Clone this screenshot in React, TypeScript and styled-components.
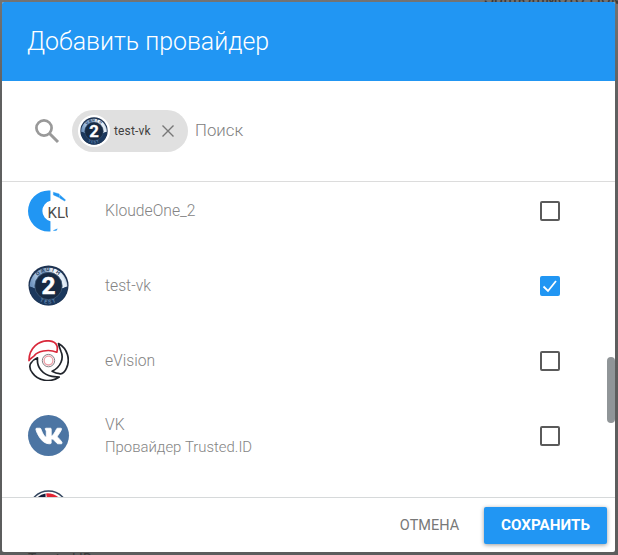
import React from "react";
import styled, { createGlobalStyle } from "styled-components";
import { FaVk } from "react-icons/fa";

const GlobalStyle = createGlobalStyle`
  * { box-sizing: border-box; }
  body { margin: 0; overflow: hidden; font-family: Roboto, "Liberation Sans", sans-serif; }
`;

const Backdrop = styled.div`
  position: relative;
  width: 618px;
  height: 555px;
  padding: 2px 3px 3px 2px;
  overflow: hidden;
  background: linear-gradient(#737373, #5f6060 18%, #5c5d5d);
`;

const PageText = styled.span<{ $x: number; $y: number; $size: number }>`
  position: absolute;
  left: ${(p) => p.$x}px;
  top: ${(p) => p.$y}px;
  font-size: ${(p) => p.$size}px;
  line-height: 16px;
  white-space: nowrap;
  color: #393939;
`;

const Dialog = styled.section`
  position: relative;
  display: flex;
  flex-direction: column;
  height: 550px;
  background: #fff;
  border-radius: 2px;
  overflow: hidden;
`;

const Header = styled.header`
  flex: none;
  display: flex;
  align-items: center;
  height: 79px;
  padding: 0 25px;
  background: #2196f3;
`;

const Title = styled.h1`
  margin: 0;
  font-size: 24.9px;
  font-weight: 300;
  line-height: 32px;
  color: #fff;
`;

const SearchBar = styled.div`
  flex: none;
  display: flex;
  align-items: center;
  height: 101px;
  padding: 0 32px;
  border-bottom: 1px solid #dcdcdc;
`;

const SearchIcon = styled.svg`
  width: 26px;
  height: 26px;
  margin-right: 12px;
`;

const Chip = styled.div`
  display: flex;
  align-items: center;
  width: 116px;
  height: 42px;
  padding-left: 6px;
  margin-right: 7px;
  border-radius: 21px;
  background: #e0e0e0;
`;

const ChipImage = styled.div`
  display: flex;
  align-items: center;
  justify-content: center;
  width: 32px;
  height: 32px;
  margin-right: 4px;
  border-radius: 50%;
  background: #fff;
`;

const ChipLabel = styled.span`
  width: 48px;
  font-size: 12px;
  letter-spacing: 0.15px;
  color: #404040;
`;

const SearchInput = styled.input`
  flex: 1;
  min-width: 0;
  padding: 0 0 2px;
  border: 0;
  outline: 0;
  background: transparent;
  font: 300 16.8px/24px Roboto, sans-serif;
  color: #555;
  &::placeholder { color: #808080; opacity: 1; }
`;

const List = styled.ul`
  flex: none;
  height: 315px;
  margin: 0;
  padding: 0;
  overflow: hidden;
  list-style: none;
`;

const Row = styled.li`
  display: flex;
  align-items: center;
  height: 75px;
  padding: 0 55px 0 26px;
  &:first-child { margin-top: -9px; }
`;

const Avatar = styled.div`
  flex: none;
  display: flex;
  width: 41px;
  height: 42px;
  margin-right: 36px;
  align-items: center;
`;

const RowText = styled.div`
  flex: 1;
  font-weight: 300;
  line-height: 22px;
  color: #848484;
`;

const Line = styled.div<{ $size?: number }>`
  font-size: ${(p) => p.$size ?? 15.7}px;
`;

const Check = styled.span<{ $on: boolean }>`
  display: flex;
  width: 20px;
  height: 20px;
  border: 2px solid ${(p) => (p.$on ? "#2196f3" : "#5a5a5a")};
  border-radius: 2px;
  background: ${(p) => (p.$on ? "#2196f3" : "#fff")};
`;

const VkCircle = styled.div`
  display: flex;
  align-items: center;
  justify-content: center;
  width: 41px;
  height: 41px;
  border-radius: 50%;
  background: #4c75a3;
  color: #fff;
  svg { stroke: #fff; stroke-width: 18px; }
`;

const ScrollThumb = styled.div`
  position: absolute;
  top: 355px;
  right: 0;
  width: 8px;
  height: 66px;
  border-radius: 4px;
  background: #909598;
`;

const Footer = styled.footer`
  flex: 1;
  display: flex;
  align-items: center;
  justify-content: flex-end;
  padding-right: 8px;
  border-top: 1px solid #d6d9da;
`;

const Button = styled.button<{ $primary?: boolean }>`
  width: ${(p) => (p.$primary ? 123 : 109)}px;
  height: 37px;
  padding: 0;
  border: 0;
  border-radius: 2px;
  font-family: inherit;
  font-size: ${(p) => (p.$primary ? 15.2 : 14.5)}px;
  font-weight: ${(p) => (p.$primary ? 700 : 400)};
  color: ${(p) => (p.$primary ? "#fff" : "#787878")};
  background: ${(p) => (p.$primary ? "#2196f3" : "transparent")};
  box-shadow: ${(p) => (p.$primary ? "0 1px 4px rgba(0,0,0,.4)" : "none")};
`;

function OauthLogo({ size, id }: { size: number; id: string }) {
  return (
    <svg width={size} height={size} viewBox="0 0 42 42">
      <defs>
        <linearGradient id={id} x1="0" y1="0.6" x2="1" y2="0.4">
          <stop offset="0" stopColor="#6f93bd" />
          <stop offset=".2" stopColor="#a3c0df" />
          <stop offset=".45" stopColor="#7696ba" />
          <stop offset=".7" stopColor="#f2f7fc" />
          <stop offset=".88" stopColor="#dfeaf5" />
          <stop offset="1" stopColor="#7590ae" />
        </linearGradient>
        <path id={id + "t"} d="M6.200 21a14.800 14.800 0 0 1 29.600 0" />
        <path id={id + "b"} d="M2.500 21a18.500 18.500 0 0 0 37 0" />
      </defs>
      <circle cx="21" cy="21" r="20.500" fill="#1c3150" />
      <path d="M1.700 22a19.300 19.300 0 0 1 38.600 0L35 24H7z" fill={`url(#${id})`} />
      <path d="M1.700 22a19.300 19.300 0 0 0 38.600 0L35 24H7z" fill="#1b385d" />
      <circle cx="21" cy="21.500" r="14" fill="#172a43" stroke="#3f5b7a" strokeWidth=".8" />
      <g fontFamily="Roboto, sans-serif" fontWeight="700" fontSize="5.500" letterSpacing="1.400" textAnchor="middle">
        <text fill="#2b4261"><textPath href={`#${id}t`} startOffset="50%">OAUTH</textPath></text>
        <text fill="#5d80ab"><textPath href={`#${id}b`} startOffset="50%">TEST</textPath></text>
      </g>
      <text x="21" y="30" textAnchor="middle" fontFamily="Roboto, sans-serif" fontWeight="700" fontSize="25" fill="#fff" stroke="#fff" strokeWidth=".5">2</text>
    </svg>
  );
}

function KloudeLogo() {
  return (
    <svg width="42" height="42" viewBox="0 0 42 42">
      <path d="M23 0H21A21 21 0 0 0 21 42H23V31.500A10.800 10.800 0 0 1 23 10.500Z" fill="#2196f3" />
      <path d="M26 1.800l6 1.700 .5 4-6.500-3zM33 4.800l5.500 5-1 .9-4.800-2.700zM26 41l4-1.700-1 1.700z" fill="#2196f3" stroke="#2196f3" strokeWidth=".4" />
      <svg width="41" height="42" overflow="hidden">
        <text x="20" y="28.500" fontFamily="Roboto, sans-serif" fontSize="15.500" fill="#4d4d4d">KLU</text>
      </svg>
    </svg>
  );
}

function VisionLogo() {
  return (
    <svg width="41" height="41" viewBox="0 0 41 41" fill="none" strokeWidth="1.700" strokeLinejoin="round">
      <path d="M1 20.500C1 8 11 0 21 .9c4 .3 7 2 8 5 .6 2.400.4 4.200-.2 6.300C20 8.500 9 11.500 6.500 15.500 4.500 17.500 2.500 18.600 1 20.500Z" stroke="#d9283a" />
      <path d="M30.500 3.500C39.600 8.600 42.500 19.300 38.500 28.200c-1.500 3.500-4.200 6.200-7 5.500-3-.300-5.200-1.300-7.400-2.500C33 27 36 18 33 11.500 32 9 31 6.500 30.500 3.500Z" stroke="#20242b" />
      <path d="M9.500 17.800c-1 9.500 5.200 17 14.500 18.600 2.300.4 4.800.4 7.300.6C22.500 43 10 41 4.500 33 1.700 29.500 1.300 26.200 2.600 23.500 4.200 20.800 6.500 19 9.500 17.800Z" stroke="#20242b" />
      <circle cx="20.500" cy="20.600" r="6.200" stroke="#858085" strokeWidth="1" />
      <circle cx="20.500" cy="20.600" r="4.400" stroke="#ed9ca5" strokeWidth="1.300" />
    </svg>
  );
}

function FlagLogo() {
  return (
    <svg width="42" height="42" viewBox="0 0 42 42">
      <circle cx="21" cy="20.500" r="20" fill="#fff" stroke="#354760" strokeWidth="1.600" />
      <path d="M18 3v18H4A17 17 0 0 1 18 3Z" fill="#111a38" />
      <path d="M18.500 3A18 18 0 0 1 38 21H22Z" fill="#e32636" />
    </svg>
  );
}

const providers = [
  { name: "KloudeOne_2", logo: <KloudeLogo /> },
  { name: "test-vk", logo: <OauthLogo size={41} id="rowOauth" />, checked: true },
  { name: "eVision", logo: <VisionLogo /> },
  { name: "VK", note: "Провайдер Trusted.ID", logo: <VkCircle><FaVk size={28} /></VkCircle> },
  { name: "", logo: <FlagLogo /> },
];

export default function App() {
  return (
    <>
      <GlobalStyle />
      <Backdrop>
        <PageText $x={484} $y={-10} $size={17}>Защюшмото Пом</PageText>
        <PageText $x={28} $y={551} $size={14}>Trusted.ID</PageText>
        <Dialog>
          <Header><Title>Добавить провайдер</Title></Header>
          <SearchBar>
            <SearchIcon viewBox="0 0 26 26" fill="none" stroke="#999" strokeWidth="2.700">
              <circle cx="10" cy="10" r="7.600" />
              <path d="M15.500 15.500L24 24" strokeWidth="3" />
            </SearchIcon>
            <Chip>
              <ChipImage><OauthLogo size={28} id="chipOauth" /></ChipImage>
              <ChipLabel>test-vk</ChipLabel>
              <svg width="12" height="12" viewBox="0 0 12 12" stroke="#777" strokeWidth="1.400">
                <path d="M.5.500l11 11M11.500.500L.5 11.500" />
              </svg>
            </Chip>
            <SearchInput placeholder="Поиск" />
          </SearchBar>
          <List>
            {providers.map((p, i) => (
              <Row key={i}>
                <Avatar>{p.logo}</Avatar>
                <RowText>
                  <Line>{p.name}</Line>
                  {p.note && <Line $size={14.9}>{p.note}</Line>}
                </RowText>
                <Check $on={!!p.checked}>
                  {p.checked && (
                    <svg width="16" height="16" viewBox="0 0 16 16" fill="none" stroke="#fff" strokeWidth="1.800">
                      <path d="M1.500 8.500l4.500 4.500L14 3" />
                    </svg>
                  )}
                </Check>
              </Row>
            ))}
          </List>
          <Footer>
            <Button>ОТМЕНА</Button>
            <Button $primary>СОХРАНИТЬ</Button>
          </Footer>
          <ScrollThumb />
        </Dialog>
      </Backdrop>
    </>
  );
}
